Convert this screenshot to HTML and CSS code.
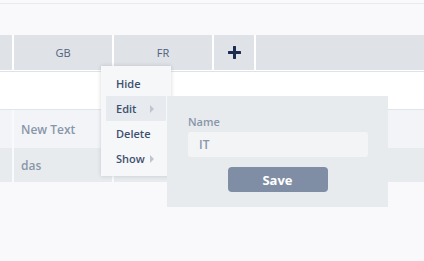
FILE: index.html
```html
<!DOCTYPE html>
<html lang="en">

<head>
  <meta charset="UTF-8">
  <meta name="viewport" content="width=device-width, initial-scale=1.0">
  <title>Table columns</title>
  <link rel="stylesheet" href="styles.css">
</head>

<body>
  <div class="topbar"></div>

  <section class="grid">
    <div class="row head">
      <div class="cell narrow"></div>
      <div class="cell">GB</div>
      <div class="cell">FR</div>
      <div class="cell add">
        <svg width="13" height="13" viewBox="0 0 13 13" aria-hidden="true">
          <path d="M6.5 1v11M1 6.5h11" stroke="#1c2c4f" stroke-width="3" stroke-linecap="round" />
        </svg>
      </div>
      <div class="cell fill"></div>
    </div>

    <div class="blank"></div>

    <div class="row body light">
      <div class="cell narrow"></div>
      <div class="cell">New Text</div>
      <div class="cell"></div>
      <div class="cell add"></div>
      <div class="cell fill"></div>
    </div>
    <div class="row body dark">
      <div class="cell narrow"></div>
      <div class="cell">das</div>
      <div class="cell"></div>
      <div class="cell add"></div>
      <div class="cell fill"></div>
    </div>
  </section>

  <!-- context menu -->
  <ul class="menu">
    <li class="menu-item">Hide</li>
    <li class="menu-item active">Edit <span class="caret"></span></li>
    <li class="menu-item">Delete</li>
    <li class="menu-item">Show <span class="caret"></span></li>
  </ul>

  <form class="submenu" onsubmit="return false">
    <label for="col-name" class="label">Name</label>
    <input id="col-name" class="input" type="text" value="IT">
    <button class="save">Save</button>
  </form>
</body>

</html>
```

FILE: styles.css
```css
*,
*::before,
*::after {
  box-sizing: border-box;
  margin: 0;
  padding: 0;
}

:root {
  --page-bg: hsl(240, 20%, 98%);
  --line: hsl(216, 16%, 92%);
  --head-bg: hsl(213, 15%, 89%);
  --row-light: hsl(216, 20%, 96%);
  --row-dark: hsl(210, 14%, 92%);
  --text-dark: hsl(218, 28%, 34%);
  --text-muted: hsl(216, 17%, 60%);
  --button: hsl(216, 17%, 57%);

  --ff: 'Open Sans', 'Liberation Sans', sans-serif;
}

body {
  min-height: 100vh;
  background-color: var(--page-bg);
  font-family: var(--ff);
  color: var(--text-dark);
}

.topbar {
  height: 4px;
  border-bottom: 1px solid var(--line);
  margin-bottom: 31px;
}

.row {
  display: flex;
  gap: 2px;
}

.cell {
  width: 98px;
  display: flex;
  align-items: center;
}

.cell.narrow {
  width: 12px;
}

.cell.add {
  width: 40px;
}

.cell.fill {
  flex: 1;
}

.head {
  height: 37px;
  background-color: #fff;
  border-bottom: 1px solid hsl(213, 16%, 89%);
  padding-bottom: 1px;
}

.head .cell {
  justify-content: center;
  background-color: var(--head-bg);
  font-size: 11px;
  color: hsl(218, 22%, 40%);
}

.blank {
  height: 38px;
  background-color: #fff;
  border-bottom: 1px solid hsl(213, 20%, 90%);
}

.body .cell {
  padding-left: 7px;
  font-size: 12px;
  font-weight: 600;
  color: var(--text-muted);
}

.body {
  background-color: hsl(220, 20%, 98%);
}

.light {
  height: 38px;
}

.light .cell {
  background-color: var(--row-light);
}

.dark {
  height: 34px;
}

.dark .cell {
  background-color: var(--row-dark);
}

/* context menu */
.menu {
  position: absolute;
  left: 101px;
  top: 66px;
  width: 70px;
  padding: 5px;
  list-style: none;
  background-color: hsl(220, 20%, 97%);
  box-shadow: 0 0 4px rgba(30, 40, 60, 0.18);
}

.menu-item {
  display: flex;
  align-items: center;
  justify-content: space-between;
  height: 25px;
  padding-left: 10px;
  padding-right: 12px;
  font-size: 11px;
  font-weight: 600;
  color: var(--text-dark);
}

.menu-item.active {
  background-color: hsl(213, 16%, 92%);
}

.caret {
  width: 0;
  height: 0;
  border-top: 4px solid transparent;
  border-bottom: 4px solid transparent;
  border-left: 4px solid hsl(214, 14%, 78%);
}

.submenu {
  position: absolute;
  left: 167px;
  top: 96px;
  width: 221px;
  height: 111px;
  padding: 18px 20px 15px 21px;
  display: flex;
  flex-direction: column;
  background-color: hsl(210, 14%, 92%);
}

.label {
  font-size: 11px;
  font-weight: 600;
  color: var(--text-muted);
  line-height: 15px;
  margin-bottom: 3px;
}

.input {
  height: 25px;
  width: 180px;
  padding-left: 11px;
  border: none;
  border-radius: 3px;
  background-color: hsl(220, 16%, 96%);
  font-family: var(--ff);
  font-size: 12px;
  font-weight: 600;
  color: var(--text-muted);
  outline: none;
}

.save {
  align-self: center;
  width: 100px;
  height: 25px;
  margin-top: 10px;
  margin-left: -1px;
  border: none;
  border-radius: 4px;
  background-color: var(--button);
  color: #fff;
  font-family: var(--ff);
  font-size: 13px;
  font-weight: 700;
}
```
